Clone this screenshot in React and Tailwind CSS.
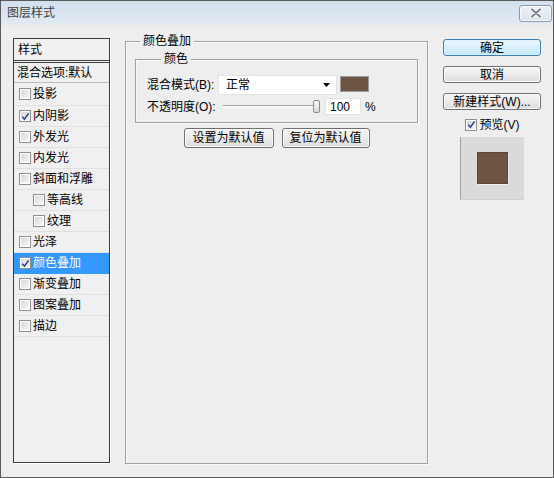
import React from "react";

const CB = ({ checked }) => (
  <span className="w-[12px] h-[12px] border border-[#8e8f8f] bg-white p-[1px] flex shrink-0">
    <span className="flex-1 bg-gradient-to-br from-[#d8d8d8] to-[#f8f8f8] flex items-center justify-center">
      {checked && (
        <svg width="9" height="9" viewBox="0 0 9 9">
          <path d="M1.3 4.6 L3.4 7.2 L7.6 1.4" stroke="#27408f" strokeWidth="1.5" fill="none" />
        </svg>
      )}
    </span>
  </span>
);

const items = [
  { t: "投影", h: "h-[23px]" },
  { t: "内阴影", c: true },
  { t: "外发光" },
  { t: "内发光" },
  { t: "斜面和浮雕" },
  { t: "等高线", sub: true },
  { t: "纹理", sub: true },
  { t: "光泽" },
  { t: "颜色叠加", c: true, sel: true },
  { t: "渐变叠加" },
  { t: "图案叠加" },
  { t: "描边" },
];

const Btn = ({ children, className = "" }) => (
  <div
    className={
      "rounded-[3px] border border-[#707070] bg-gradient-to-b from-[#f3f3f3] via-[#ebebeb] to-[#dcdcdc] shadow-[inset_0_0_0_1px_#fcfcfc] flex items-center justify-center leading-none " +
      className
    }
  >
    {children}
  </div>
);

export default function App() {
  return (
    <div className="w-[554px] h-[478px] bg-[#eeeeee] border border-[#5a5a5a] flex flex-col font-['Liberation_Sans','Noto_Sans_CJK_SC',sans-serif] text-[12px] text-black overflow-hidden">
      {/* title bar */}
      <div className="h-[24px] shrink-0 bg-gradient-to-b from-[#d3e0ee] to-[#e2eaf3] flex items-center justify-between pl-[6px] pr-[1px]">
        <span className="text-[#404040] leading-none">图层样式</span>
        <div className="w-[33px] h-[17px] rounded-[3px] border border-[#8d9aab] bg-gradient-to-b from-[#eef2f7] to-[#dbe3ec] shadow-[inset_0_0_0_1px_#f6f8fb] flex items-center justify-center">
          <svg width="12" height="10" viewBox="0 0 12 10">
            <path d="M2 1.5 L10 8.5 M10 1.5 L2 8.5" stroke="#ffffff" strokeWidth="4" strokeLinecap="round" />
            <path d="M2 1.5 L10 8.5 M10 1.5 L2 8.5" stroke="#7b838c" strokeWidth="2.2" strokeLinecap="round" />
          </svg>
        </div>
      </div>

      {/* body */}
      <div className="flex-1 flex items-start pl-[12px] pt-[9px]">
        {/* left list */}
        <div className="mt-[4px] w-[97px] h-[425px] border border-[#3b3b3b] bg-[#f0f0f0] shadow-[1px_1px_0_#ffffff] flex flex-col shrink-0">
          <div className="h-[22px] border-b border-[#3b3b3b] flex items-center pl-[4px] leading-none">样式</div>
          <div className="h-[1px] bg-[#f7f7f7]" />
          <div className="h-[21px] border-t border-b border-t-[#3b3b3b] border-b-[#bdbdbd] flex items-center pl-[3px] leading-none whitespace-nowrap">
            混合选项:默认
          </div>
          {items.map((it) => (
            <div
              key={it.t}
              className={
                (it.h || "h-[21px]") +
                " border-b border-[#e0e0e0] flex items-center gap-[2px] leading-none " +
                (it.sub ? "pl-[19px] " : "pl-[5px] ") +
                (it.sel ? "bg-[#3399ff] text-white border-b-[#3399ff]" : "")
              }
            >
              <CB checked={it.c} />
              <span>{it.t}</span>
            </div>
          ))}
        </div>

        {/* middle */}
        <fieldset className="ml-[15px] w-[303px] h-[430px] border border-[#a0a0a0] shadow-[inset_1px_1px_0_#fafafa,1px_1px_0_#fafafa] px-0 pb-0 shrink-0">
          <legend className="ml-[14px] px-[3px] leading-[14px]">颜色叠加</legend>
          <fieldset className="mt-[4px] mx-[9px] border border-[#a0a0a0] shadow-[inset_1px_1px_0_#fafafa,1px_1px_0_#fafafa] pl-[11px] pb-[7px]">
            <legend className="ml-[14px] px-[3px] leading-[14px]">颜色</legend>
            <div className="mt-[9px] h-[20px] flex items-start">
              <div className="w-[71px] h-[20px] flex items-center whitespace-nowrap leading-none">混合模式(B):</div>
              <div className="w-[119px] h-[20px] bg-white border border-[#e3e3e3] flex items-center justify-between pl-[7px] pr-[6px] leading-none">
                <span>正常</span>
                <svg width="7" height="4" viewBox="0 0 7 4">
                  <path d="M0 0 L7 0 L3.5 4 Z" fill="#000" />
                </svg>
              </div>
              <div className="ml-[3px] mt-[1px] w-[29px] h-[16px] bg-[#6e5443] border border-[#9a9a9a]" />
            </div>
            <div className="mt-[3px] h-[17px] flex items-center">
              <div className="w-[76px] whitespace-nowrap leading-none">不透明度(O):</div>
              <div className="w-[97px] h-[17px] flex items-center">
                <div className="flex-1 h-[3px] border-t border-[#a6a6a6] bg-[#f8f8f8]" />
                <div className="w-[7px] h-[13px] rounded-[2px] border border-[#8b8b8b] bg-gradient-to-b from-[#fafafa] to-[#d9d9d9]" />
              </div>
              <div className="ml-[5px] w-[36px] h-[17px] bg-white border border-[#e3e3e3] flex items-center pl-[4px] leading-none">100</div>
              <span className="ml-[4px] leading-none">%</span>
            </div>
          </fieldset>
          <div className="mt-[5px] flex justify-center gap-[8px]">
            <Btn className="w-[90px] h-[20px]">设置为默认值</Btn>
            <Btn className="w-[88px] h-[20px]">复位为默认值</Btn>
          </div>
        </fieldset>

        {/* right */}
        <div className="ml-[15px] mt-[5px] w-[98px] flex flex-col shrink-0">
          <div className="h-[17px] rounded-[3px] border border-[#3c7fb1] bg-gradient-to-b from-[#eaf6fd] via-[#d9f0fc] to-[#bee6fd] shadow-[inset_0_0_0_1px_#dff2fc] flex items-center justify-center leading-none">
            确定
          </div>
          <Btn className="mt-[10px] h-[17px]">取消</Btn>
          <Btn className="mt-[10px] h-[17px] whitespace-nowrap">新建样式(W)...</Btn>
          <div className="mt-[8px] h-[13px] flex items-center justify-center gap-[3px] leading-none">
            <CB checked />
            <span>预览(V)</span>
          </div>
          <div className="mt-[6px] self-center w-[64px] h-[63px] bg-[#dadada] border-l border-[#9f9f9f] border-b border-b-[#cfcfcf] flex items-center justify-center">
            <div className="w-[31px] h-[32px] bg-[#6e5443] border border-[#5c4536] shadow-[1px_1px_0_#eeeeee]" />
          </div>
        </div>
      </div>
    </div>
  );
}
